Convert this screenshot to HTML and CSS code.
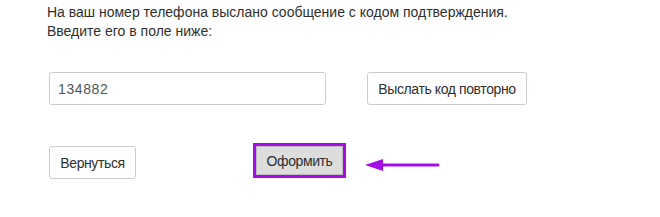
FILE: index.html
```html
<!DOCTYPE html>
<html>
<head>
    <title>Подтверждение</title>
    <link rel="stylesheet" href="styles.css">
</head>
<body>
    <div class="confirm">
        <p class="confirm-text">На ваш номер телефона выслано сообщение с кодом подтверждения.<br>Введите его в поле ниже:</p>
        <div class="code-row">
            <input type="text" class="code-input" value="134882">
            <button class="btn btn-resend">Выслать код повторно</button>
        </div>
        <div class="action-row">
            <button class="btn btn-back">Вернуться</button>
            <button class="btn btn-submit">Оформить</button>
            <svg class="arrow" width="76" height="14" viewBox="0 0 76 14">
                <line x1="12" y1="7" x2="73" y2="7" stroke="#a60ee8" stroke-width="3" stroke-linecap="round"/>
                <polygon points="0,7 18,1 18,13" fill="#a60ee8"/>
            </svg>
        </div>
    </div>
</body>
</html>
```

FILE: styles.css
```css
body {
    margin: 0;
    background: #fff;
    font-family: 'Liberation Sans', Arial, sans-serif;
    color: #2f2f2f;
}

.confirm {
    padding: 3px 0 0 47px;
}

.confirm-text {
    margin: 0;
    font-size: 14px;
    line-height: 19px;
}

.code-row {
    display: flex;
    align-items: center;
    gap: 41px;
    margin-top: 31px;
    padding-left: 2px;
}

.code-input {
    width: 277px;
    height: 33px;
    box-sizing: border-box;
    border: 1px solid #ccc;
    border-radius: 3px;
    padding: 0 8px;
    font-family: inherit;
    font-size: 14px;
    letter-spacing: 0.6px;
    color: #555;
    outline: none;
}

.btn {
    height: 33px;
    box-sizing: border-box;
    padding: 0;
    border: 1px solid #ccc;
    border-radius: 3px;
    background: #fff;
    font-family: inherit;
    font-size: 14px;
    letter-spacing: -0.4px;
    color: #2f2f2f;
    cursor: pointer;
}

.btn-resend {
    width: 160px;
}

.action-row {
    display: flex;
    align-items: center;
    margin-top: 41px;
    padding-left: 2px;
}

.btn-back {
    width: 87px;
}

.btn-submit {
    width: 87px;
    height: 29px;
    margin: -4px 0 0 120px;
    border-color: #bbb;
    border-radius: 0;
    background: #dddddd;
    outline: 3px solid #a60ee8;
}

.arrow {
    margin: 4px 0 0 22px;
}
```
